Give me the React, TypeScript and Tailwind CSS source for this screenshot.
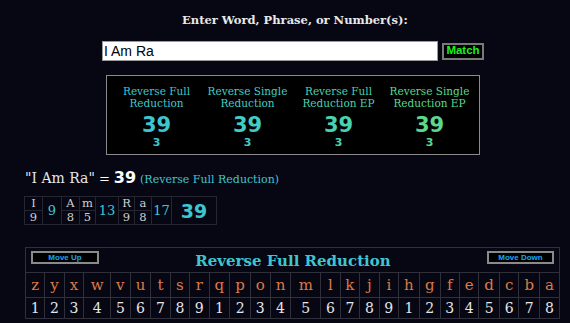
import React from "react";

const serif = "font-['DejaVu_Serif',serif]";

const cols = [
  { t1: "Reverse Full", t2: "Reduction", color: "text-[#3ec6cf]" },
  { t1: "Reverse Single", t2: "Reduction", color: "text-[#41cdc4]" },
  { t1: "Reverse Full", t2: "Reduction EP", color: "text-[#49d2ae]" },
  { t1: "Reverse Single", t2: "Reduction EP", color: "text-[#5ad98c]" },
];

// word breakdown: letters with their value, then word totals
const words = [
  { letters: [["I", "9", "w-[18px]"]], total: "9", tw: "w-[19px]" },
  { letters: [["A", "8", "w-[18px]"], ["m", "5", "w-[16px]"]], total: "13", tw: "w-[23px]" },
  { letters: [["R", "9", "w-[16px]"], ["a", "8", "w-[17px]"]], total: "17", tw: "w-[20px]" },
];

const alphabet = "zyxwvutsrqponmlkjihgfedcba".split("");
const values = [1, 2, 3, 4, 5, 6, 7, 8, 9, 1, 2, 3, 4, 5, 6, 7, 8, 9, 1, 2, 3, 4, 5, 6, 7, 8];

export default function App() {
  return (
    <div className="min-h-screen w-[570px] h-[323px] overflow-hidden bg-[#070714] text-white">
      {/* heading */}
      <div className={`pt-[12px] pl-[182px] h-[41px] text-[11.5px] leading-[16px] font-bold text-[#e8e8e8] ${serif}`}>
        Enter Word, Phrase, or Number(s):
      </div>

      {/* input row */}
      <div className="flex items-center pl-[102px] gap-[4px] h-[20px]">
        <div className="w-[336px] h-[20px] bg-white border border-[#9a9a9a] flex items-center pl-[1px] font-['Liberation_Sans',sans-serif] text-[14px] text-black">
          I Am Ra
        </div>
        <div className="w-[42px] h-[17px] bg-black border-2 border-[#7a7a7a] flex items-center justify-center font-['Liberation_Sans',sans-serif] font-bold text-[11.5px] text-[#1ef01e]">
          Match
        </div>
      </div>

      {/* cipher summary */}
      <div className="mt-[14px] ml-[106px] w-[374px] h-[80px] bg-black border border-[#8a8a8a] px-[4px] pt-[10px] grid grid-cols-4">
        {cols.map((c, i) => (
          <div key={i} className={`flex flex-col items-center ${c.color}`}>
            <div className={`text-[10.5px] leading-[11.5px] text-center ${serif}`}>
              {c.t1}
              <br />
              {c.t2}
            </div>
            <div className="mt-[4px] font-['DejaVu_Sans',sans-serif] font-bold text-[21px] leading-[24px]">39</div>
            <div className="font-['DejaVu_Sans',sans-serif] font-bold text-[11px] leading-[12px]">3</div>
          </div>
        ))}
      </div>

      {/* result line */}
      <div className="mt-[11px] ml-[25px] flex items-baseline h-[20px]">
        <span className={`${serif} text-[14px] text-[#e6e6e6]`}>"I Am Ra"</span>
        <span className="font-['DejaVu_Sans',sans-serif] text-[13px] text-white ml-[4px]">=</span>
        <span className="font-['DejaVu_Sans',sans-serif] font-bold text-[16px] text-white ml-[4px]">39</span>
        <span className={`${serif} text-[11px] text-[#3ec6cf] ml-[4px]`}>(Reverse Full Reduction)</span>
      </div>

      {/* breakdown */}
      <div className="mt-[10px] ml-[24px]">
        <table className="border-collapse">
          <tbody>
            <tr className="h-[14px]">
              {words.map((w, wi) => (
                <React.Fragment key={wi}>
                  {w.letters.map(([l, , cw], li) => (
                    <td key={li} className={`border border-[#262630] text-center p-0 ${cw} text-[11.5px] leading-[13px] text-[#d0d0d0] ${serif}`}>
                      {l}
                    </td>
                  ))}
                  <td rowSpan={2} className={`border border-[#262630] text-center p-0 ${w.tw} text-[13px] leading-[16px] text-[#3ec6cf] ${serif}`}>
                    {w.total}
                  </td>
                </React.Fragment>
              ))}
              <td rowSpan={2} className="border border-[#262630] text-center p-0 w-[45px] font-['DejaVu_Sans',sans-serif] font-bold text-[19px] leading-[22px] text-[#3ec6cf]">
                39
              </td>
            </tr>
            <tr className="h-[14px]">
              {words.map((w, wi) =>
                w.letters.map(([, v], li) => (
                  <td key={wi + "-" + li} className={`border border-[#262630] text-center p-0 text-[11.5px] leading-[13px] text-[#d0d0d0] ${serif}`}>
                    {v}
                  </td>
                ))
              )}
            </tr>
          </tbody>
        </table>
      </div>

      {/* cipher chart */}
      <div className="mt-[22px] ml-[25px] w-[535px]">
        <table className="w-full border-collapse">
          <tbody>
            <tr className="h-[25px]">
              <td colSpan={26} className="border border-[#30303a] p-0">
                <div className="flex items-center justify-between px-[5px] h-[24px]">
                  <div className="w-[68px] h-[13px] bg-black border-2 border-[#8a8a8a] flex items-center justify-center font-['Liberation_Sans',sans-serif] font-bold text-[8px] text-[#16a6f0] mt-[-5px]">
                    Move Up
                  </div>
                  <div className={`${serif} font-bold text-[15px] text-[#3ec6cf] mt-[2px]`}>Reverse Full Reduction</div>
                  <div className="w-[67px] h-[13px] bg-black border-2 border-[#8a8a8a] flex items-center justify-center font-['Liberation_Sans',sans-serif] font-bold text-[8px] text-[#16a6f0] mt-[-5px]">
                    Move Down
                  </div>
                </div>
              </td>
            </tr>
            <tr className="h-[25px]">
              {alphabet.map((l) => (
                <td key={l} className={`border border-[#30303a] text-center p-0 ${serif} text-[15px] leading-[18px] text-[#dd7a44]`}>
                  {l}
                </td>
              ))}
            </tr>
            <tr className="h-[21px]">
              {values.map((v, i) => (
                <td key={i} className={`border border-[#30303a] text-center p-0 ${serif} text-[14px] leading-[16px] text-[#e6e6e6]`}>
                  {v}
                </td>
              ))}
            </tr>
          </tbody>
        </table>
      </div>
    </div>
  );
}
